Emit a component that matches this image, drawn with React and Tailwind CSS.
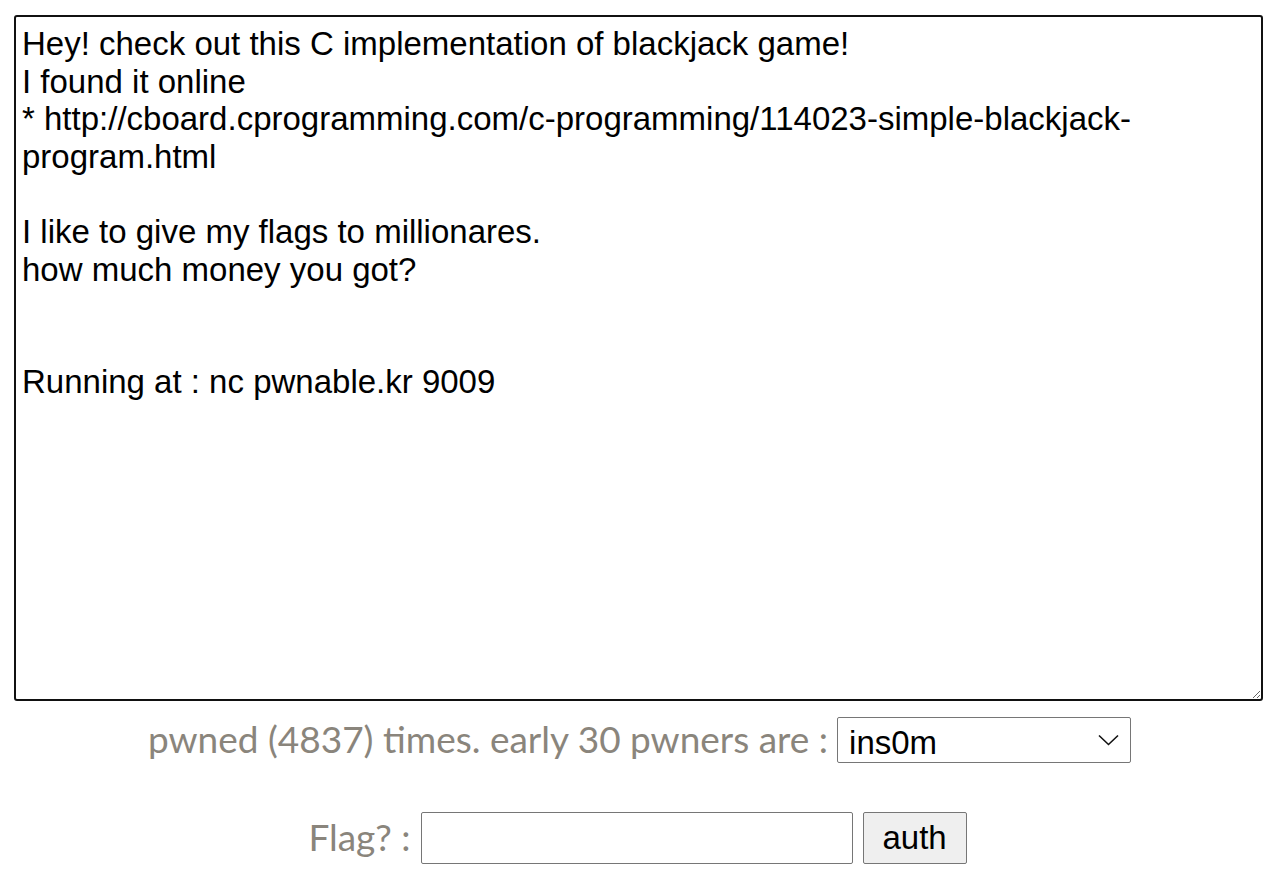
import { useState } from 'react';

const DESCRIPTION = `Hey! check out this C implementation of blackjack game!
I found it online
* http://cboard.cprogramming.com/c-programming/114023-simple-blackjack-program.html

I like to give my flags to millionares.
how much money you got?


Running at : nc pwnable.kr 9009`;

export default function App() {
    const [flag, setFlag] = useState('');

    return (
        <div className="bg-white min-h-screen pt-[15px]">
            <div className="w-[1249px] ml-[14px]">
                <textarea
                    readOnly
                    defaultValue={DESCRIPTION}
                    className="block w-full h-[686px] border-2 border-[#111] rounded-[3px] px-[6px] py-[8px] text-[33px] leading-[37.6px] text-black font-['Liberation_Sans',Arial,sans-serif] outline-none"
                />

                <div className="flex items-center justify-center gap-[9px] mt-[16px] h-[46px] pl-[2px]">
                    <span className="text-[37px] leading-[44px] text-[#8a857c] font-['Lato',sans-serif] -mt-[3px]">pwned (4837) times. early 30 pwners are :</span>
                    <div className="relative">
                        <select className="appearance-none block w-[294px] h-[46px] border border-[#767676] rounded-[2px] pl-[11px] pr-[40px] text-[33px] text-black bg-white font-['Liberation_Sans',Arial,sans-serif]">
                            <option>ins0m</option>
                        </select>
                        <svg className="absolute right-[12px] top-[17px] pointer-events-none" width="21" height="12" viewBox="0 0 21 12" fill="none">
                            <path d="M1 1.5 L10.5 10.5 L20 1.5" stroke="#111" strokeWidth="1.6" />
                        </svg>
                    </div>
                </div>

                <div className="flex items-center justify-center gap-[10px] mt-[49px] h-[52px] pr-[2px]">
                    <span className="text-[37px] leading-[44px] text-[#8a857c] font-['Lato',sans-serif] -mt-[3px]">Flag? :</span>
                    <input
                        value={flag}
                        onChange={(e) => setFlag(e.target.value)}
                        className="w-[432px] h-[52px] border border-[#767676] rounded-[2px] px-2 text-[33px] font-['Liberation_Sans',Arial,sans-serif]"
                    />
                    <button className="w-[104px] h-[52px] border border-[#767676] rounded-[2px] bg-[#efefef] text-[33px] text-black font-['Liberation_Sans',Arial,sans-serif]">
                        auth
                    </button>
                </div>
            </div>
        </div>
    );
}
